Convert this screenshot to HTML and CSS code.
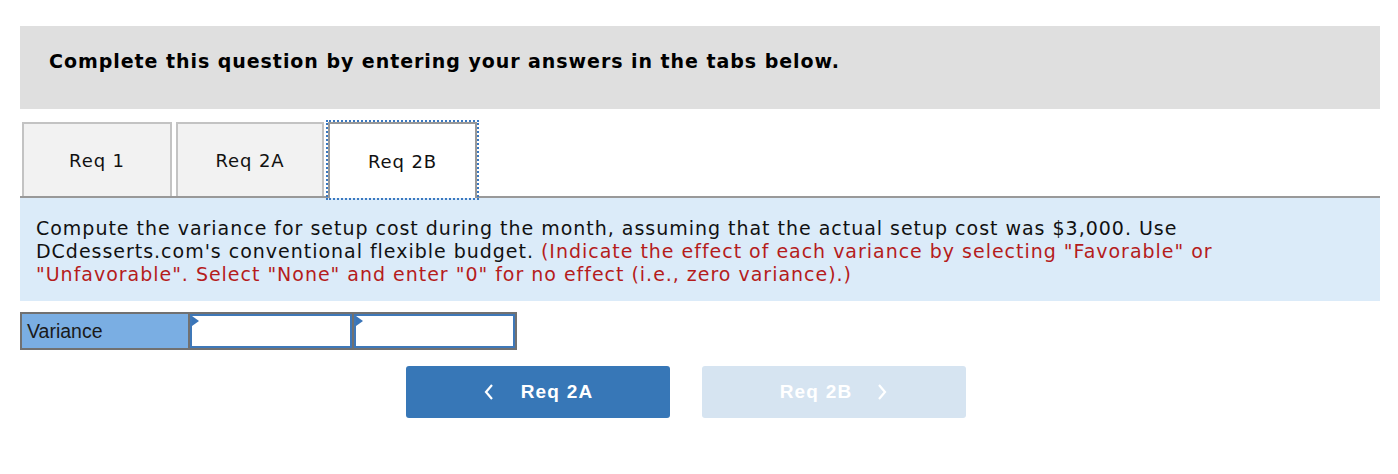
FILE: index.html
```html
<!DOCTYPE html>
<html>
<head>
<meta charset="utf-8">
<link rel="stylesheet" href="styles.css">
</head>
<body>
<div class="wrap">
  <div class="header">Complete this question by entering your answers in the tabs below.</div>
  <div class="tabs">
    <div class="tab">Req 1</div>
    <div class="tab t2">Req 2A</div>
    <div class="tab active">Req 2B</div>
  </div>
  <div class="panel">
    Compute the variance for setup cost during the month, assuming that the actual setup cost was $3,000. Use DCdesserts.com's conventional flexible budget. <span class="red">(Indicate the effect of each variance by selecting "Favorable" or "Unfavorable". Select "None" and enter "0" for no effect (i.e., zero variance).)</span>
  </div>
  <div class="vrow">
    <div class="vlabel">Variance</div>
    <div class="vinput"></div>
    <div class="vinput"></div>
  </div>
  <div class="nav">
    <div class="btn prev"><span class="chev">
      <svg width="12" height="18" viewBox="0 0 12 18"><path d="M9 2 L3 9 L9 16" fill="none" stroke="#fff" stroke-width="2.2"/></svg>
    </span>Req 2A</div>
    <div class="btn next">Req 2B<span class="chev r">
      <svg width="12" height="18" viewBox="0 0 12 18"><path d="M3 2 L9 9 L3 16" fill="none" stroke="#fff" stroke-width="2.2"/></svg>
    </span></div>
  </div>
</div>
</body>
</html>
```
FILE: styles.css
```css
body {
  margin: 0;
  background: #fff;
  font-family: "DejaVu Sans", Verdana, sans-serif;
}
.wrap {
  padding: 26px 18px 0 20px;
}
.header {
  background: #dfdfdf;
  height: 83px;
  box-sizing: border-box;
  padding: 24px 29px 0;
  font-weight: bold;
  font-size: 19px;
  letter-spacing: 0.95px;
  line-height: 22px;
  color: #000;
}
.tabs {
  margin-top: 13px;
  display: flex;
  align-items: flex-start;
  gap: 4px;
  padding-left: 2px;
  border-bottom: 2px solid #999;
  height: 74px;
}
.tab {
  width: 150px;
  height: 74px;
  box-sizing: border-box;
  border: 2px solid #c3c3c3;
  border-bottom: none;
  background: #f2f2f2;
  font-size: 18px;
  letter-spacing: 0.9px;
  display: flex;
  align-items: center;
  justify-content: center;
  color: #111;
}
.tab.t2 { width: 148px; }
.tab.active {
  background: #fff;
  border-color: #999;
  height: 76px;
  width: 149px;
  outline: 2px dotted #3a78c0;
  position: relative;
}
.panel {
  background: #dbebf9;
  padding: 19px 40px 15px 16px;
  font-size: 19px;
  letter-spacing: 0.98px;
  line-height: 23px;
  color: #111;
}
.red { color: #b51c1c; }
.vrow {
  margin-top: 11px;
  display: flex;
  width: 497px;
  height: 38px;
  box-sizing: border-box;
  border: 2px solid #717171;
  background: #717171;
  gap: 2px;
}
.vlabel {
  width: 166px;
  background: #7aaee3;
  font-family: "Liberation Sans", Arial, sans-serif;
  font-size: 19.5px;
  line-height: 34px;
  padding-left: 5px;
  box-sizing: border-box;
  color: #1a1a1a;
}
.vinput {
  flex: 1;
  background: #fff;
  border: 2px solid #3f78b8;
  position: relative;
}
.vinput::before {
  content: "";
  position: absolute;
  left: 0;
  top: 0;
  border-top: 5px solid transparent;
  border-bottom: 5px solid transparent;
  border-left: 7px solid #3a75b8;
}
.nav {
  margin-top: 16px;
  padding-left: 386px;
  display: flex;
  gap: 32px;
}
.btn {
  width: 264px;
  height: 52px;
  border-radius: 3px;
  display: flex;
  align-items: center;
  justify-content: center;
  font-family: "Liberation Sans", Arial, sans-serif;
  font-weight: bold;
  font-size: 19px;
  letter-spacing: 1.2px;
  color: #fff;
}
.btn.prev { background: #3777b7; }
.btn.prev .chev { margin-right: 26px; }
.btn.next { background: #d6e4f1; }
.chev { display: flex; margin-right: 22px; }
.chev.r { margin-right: 0; margin-left: 24px; }
```
